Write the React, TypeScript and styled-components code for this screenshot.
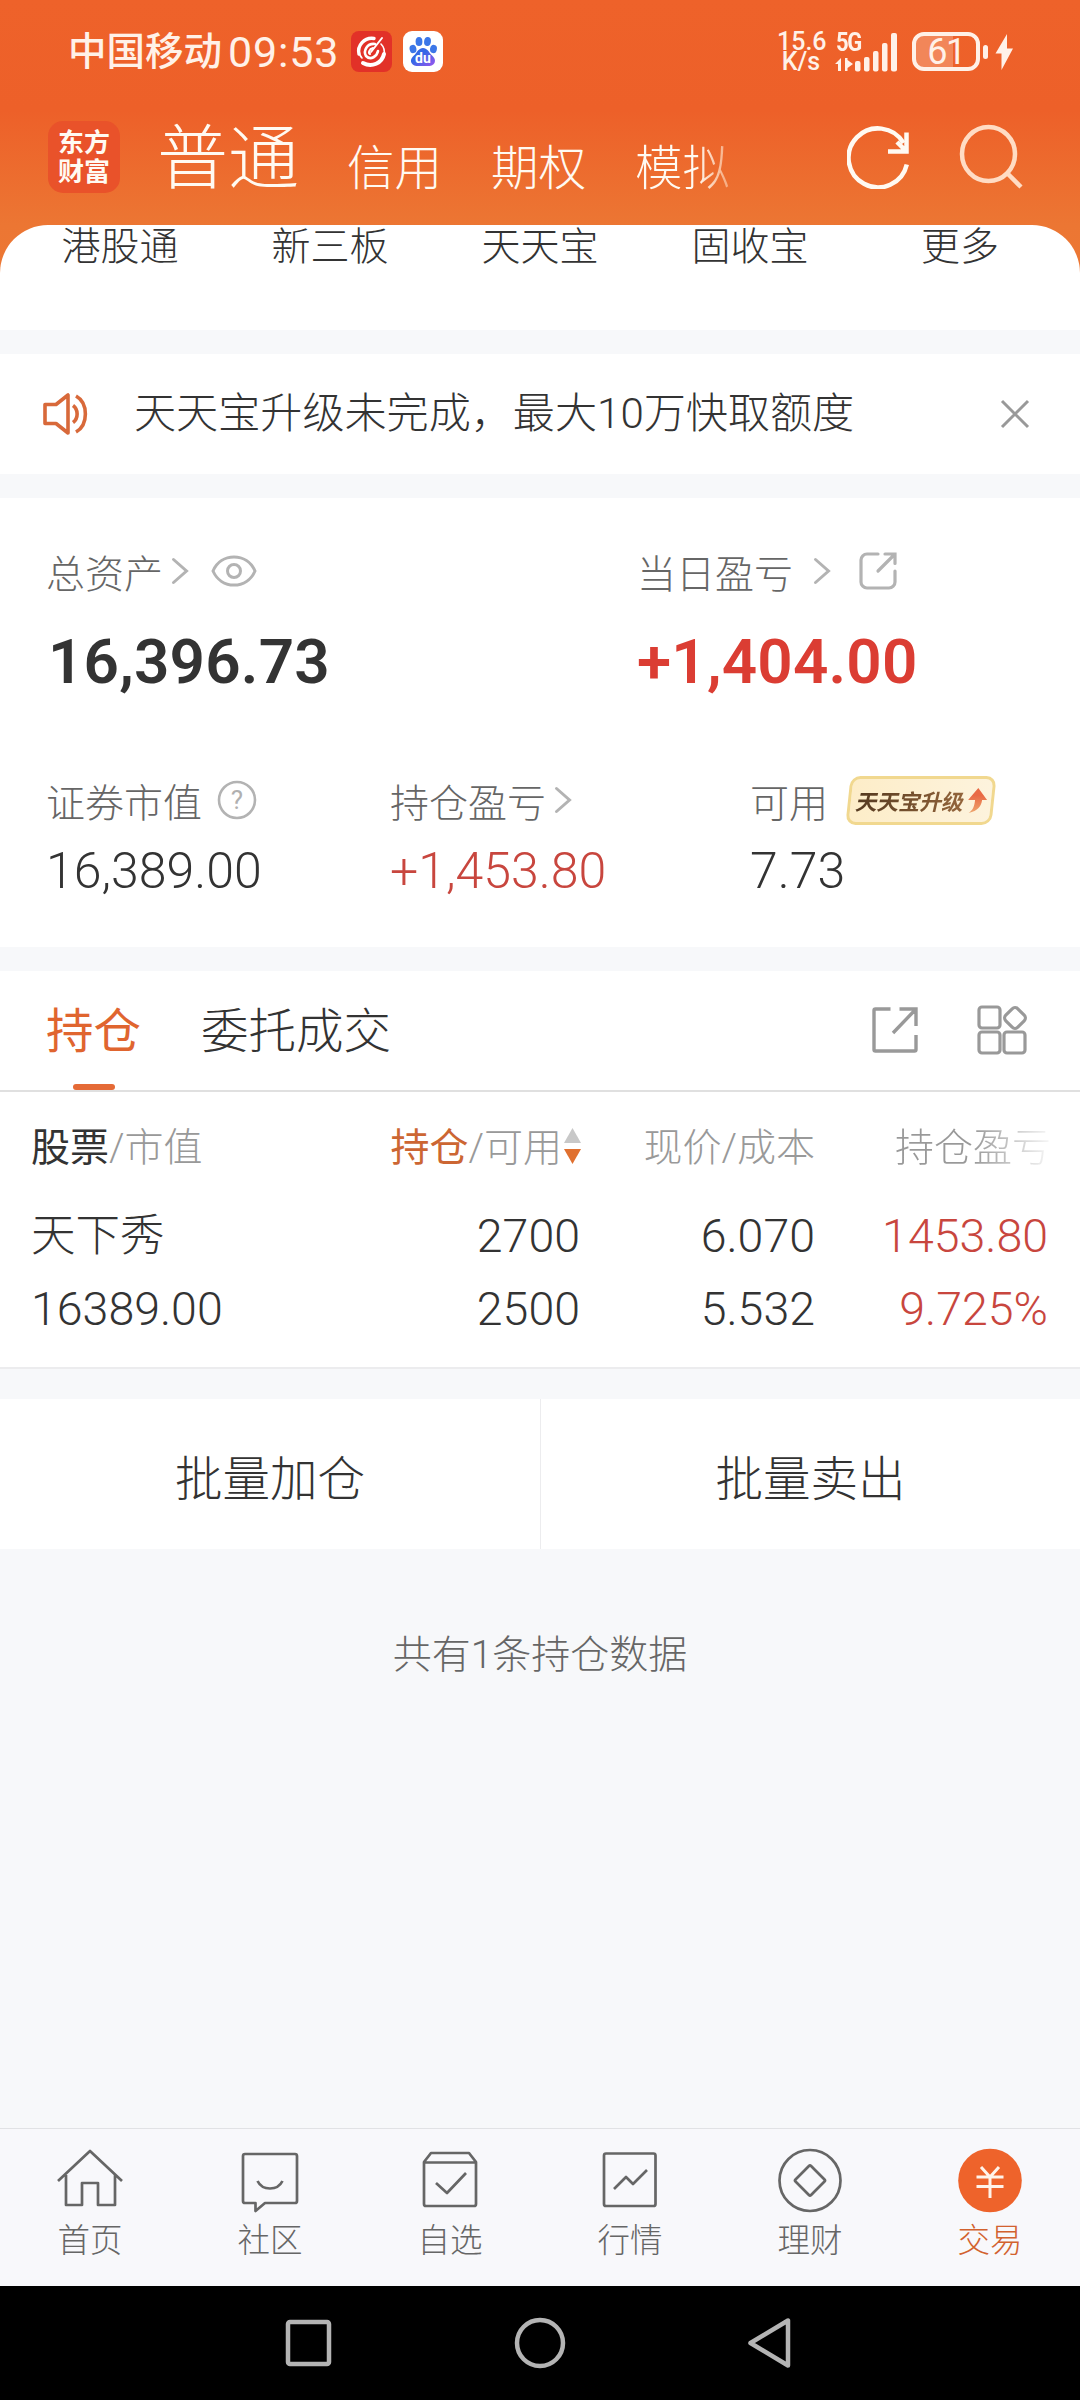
import React from "react";
import styled, { createGlobalStyle } from "styled-components";

const Global = createGlobalStyle`
  * { box-sizing: border-box; }
  html, body { margin: 0; padding: 0; }
  body {
    background: #f7f8fa;
    font-family: Roboto, "Noto Sans CJK SC", sans-serif;
    font-weight: 300;
    color: #333;
  }
  svg { display: block; flex: none; }
`;

const Screen = styled.div`
  width: 1080px;
  height: 2400px;
  display: flex;
  flex-direction: column;
  overflow: hidden;
  white-space: nowrap;
`;

/* ---------- top area ---------- */

const TopArea = styled.header`
  height: 330px;
  display: flex;
  flex-direction: column;
  background: linear-gradient(#ee622a 0, #ed6029 110px, #ec7633 225px, #ec7a35 330px);
`;

const StatusBar = styled.div`
  height: 103px;
  padding: 0 67px 0 68px;
  display: flex;
  align-items: center;
  color: #fff1e8;
`;

const Carrier = styled.span`
  font-size: 38.5px;
  line-height: 44px;
  font-weight: 500;
`;

const Clock = styled.span`
  margin-left: 6px;
  width: 115px;
  font-size: 43px;
  line-height: 44px;
  font-weight: 400;
  letter-spacing: 0.8px;
`;

const AppIcons = styled.div`
  display: flex;
  gap: 11px;
  margin-left: 8px;
`;

const StatusRight = styled.div`
  margin-left: auto;
  display: flex;
  align-items: center;
`;

const Speed = styled.div`
  width: 48px;
  margin-right: 10px;
  text-align: center;
  font-size: 25px;
  line-height: 20px;
  font-weight: 500;
`;

const Network = styled.div`
  width: 62px;
  height: 40px;
  display: flex;
  margin-right: 15px;
  position: relative;
`;

const NetworkLabel = styled.span`
  position: absolute;
  left: 1px;
  top: 1px;
  font-size: 25px;
  line-height: 20px;
  font-weight: 700;
  letter-spacing: -1.5px;
  transform: scaleX(0.88);
  transform-origin: left;
`;

const Battery = styled.div`
  width: 68px;
  height: 39px;
  border: 4px solid #fff1e8;
  border-radius: 12px;
  display: flex;
  align-items: center;
  justify-content: center;
  background: linear-gradient(90deg, #f28659 61%, transparent 61%);
  font-size: 36px;
  line-height: 36px;
  font-weight: 400;
  letter-spacing: -1.5px;
`;

const BatteryTip = styled.div`
  width: 5px;
  height: 14px;
  margin: 0 7px 0 3px;
  border-radius: 3px;
  background: #fff1e8;
`;

const TitleRow = styled.div`
  height: 122px;
  display: flex;
  padding: 0 57px 0 48px;
  color: #fffaf2;
`;

const Logo = styled.div`
  width: 72px;
  height: 72px;
  margin-top: 18px;
  padding-top: 8px;
  border-radius: 15px;
  background: #e9522a;
  text-align: center;
  font-size: 26px;
  line-height: 29px;
  font-weight: 700;
`;

const Accounts = styled.nav`
  display: flex;
  margin-left: 37px;
`;

const MainAccount = styled.span`
  font-size: 71px;
  line-height: 80px;
  margin: 16px 48px 0 0;
`;

const Account = styled.span<{ $fade?: boolean }>`
  font-size: 47.5px;
  line-height: 60px;
  margin: 36px 49px 0 0;
  ${(p) =>
    p.$fade &&
    `background: linear-gradient(90deg, #fffaf2 65%, rgba(255,220,190,0.5)); 
     -webkit-background-clip: text; color: transparent;`}
`;

const TitleActions = styled.div`
  margin-left: auto;
  display: flex;
  gap: 48px;
  padding-top: 20px;
`;

const ShortcutPanel = styled.div`
  flex: 1;
  background: #fff;
  border-radius: 48px 48px 0 0;
  padding: 0 15px;
  display: grid;
  grid-template-columns: repeat(5, 1fr);
  text-align: center;
  font-size: 39px;
  line-height: 44px;
`;

/* ---------- sections ---------- */

const Notice = styled.section`
  height: 120px;
  margin: 24px 0;
  background: #fff;
  padding: 0 50px 0 42px;
  display: flex;
  align-items: center;
  font-size: 42.1px;
`;

const NoticeText = styled.span`
  margin-left: 42px;
  flex: 1;
  line-height: 50px;
`;

const Assets = styled.section`
  height: 449px;
  background: #fff;
  padding: 0 0 0 46px;
`;

const PrimaryAssets = styled.div`
  height: 227px;
  padding-top: 50px;
  display: grid;
  grid-template-columns: 591px 1fr;
`;

const SecondaryAssets = styled.div`
  display: grid;
  grid-template-columns: 344px 360px 1fr;
  padding-top: 52px;
`;

const Label = styled.div`
  display: flex;
  align-items: center;
  height: 46px;
  font-size: 39px;
  color: #666;
`;

const Total = styled.div<{ $up?: boolean }>`
  margin-top: 35px;
  font-size: 62px;
  line-height: 66px;
  font-weight: 600;
  letter-spacing: ${(p) => (p.$up ? "0.2px" : "0.2px")};
  padding-left: ${(p) => (p.$up ? "0" : "2px")};
  color: ${(p) => (p.$up ? "#db3d33" : "#333")};
`;

const Amount = styled.div<{ $up?: boolean }>`
  margin-top: 20px;
  font-size: 50px;
  line-height: 56px;
  color: ${(p) => (p.$up ? "#c8463e" : "#333")};
`;

const Spacer = styled.i<{ $w: number }>`
  width: ${(p) => p.$w}px;
  flex: none;
`;

const Badge = styled.div`
  width: 146px;
  height: 49px;
  margin-left: 20px;
  border: 3px solid #f1d88f;
  border-radius: 10px;
  background: linear-gradient(90deg, #fdedc8, #fdf3dd);
  transform: skewX(-6deg);
  display: flex;
  align-items: center;
  padding-left: 6px;
  gap: 3px;
  font-size: 21.8px;
  font-weight: 700;
  letter-spacing: -0.3px;
  color: #6b4827;
`;

const BadgeText = styled.span`
  transform: skewX(-7deg);
  background: linear-gradient(90deg, #553a20, #94653b);
  -webkit-background-clip: text;
  color: transparent;
`;

/* ---------- positions ---------- */

const Tabs = styled.div`
  height: 121px;
  margin-top: 24px;
  background: #fff;
  border-bottom: 2px solid #e0e0e0;
  display: flex;
  padding: 0 53px 0 46px;
  font-size: 47.5px;
`;

const Tab = styled.div<{ $active?: boolean }>`
  display: flex;
  flex-direction: column;
  align-items: center;
  justify-content: space-between;
  margin-right: 60px;
  padding-top: 31px;
  line-height: 60px;
  color: ${(p) => (p.$active ? "#e0652f" : "#333")};
  font-weight: ${(p) => (p.$active ? 400 : 300)};
  &::after {
    content: "";
    width: 42px;
    height: 6px;
    border-radius: 3px;
    background: ${(p) => (p.$active ? "#e56a36" : "transparent")};
  }
`;

const TabTools = styled.div`
  margin-left: auto;
  display: flex;
  align-items: center;
  gap: 58px;
  padding-bottom: 1px;
`;

const Table = styled.div`
  height: 277px;
  background: #fff;
  border-bottom: 2px solid #ececee;
  padding: 24px 32px 0 31px;
`;

const GridRow = styled.div`
  display: grid;
  grid-template-columns: 300px 249px 235px 233px;
`;

const HeadRow = styled(GridRow)`
  height: 50px;
  align-items: center;
  font-size: 39px;
  color: #999;
`;

const HeadCell = styled.div<{ $left?: boolean }>`
  display: flex;
  align-items: center;
  justify-content: ${(p) => (p.$left ? "flex-start" : "flex-end")};
`;

const Strong = styled.span<{ $c: string }>`
  color: ${(p) => p.$c};
  font-weight: 400;
`;

const SortArrows = styled.div`
  width: 18px;
  margin: 4px -2px 0 2px;
`;

const FadeText = styled.span`
  background: linear-gradient(90deg, #999 50%, #f4f4f4 98%);
  -webkit-background-clip: text;
  color: transparent;
  margin-right: -3px;
`;

const StockRow = styled(GridRow)`
  padding-top: 34px;
  font-size: 46.5px;
  line-height: 73px;
`;

const Cell = styled.div<{ $left?: boolean; $up?: boolean }>`
  text-align: ${(p) => (p.$left ? "left" : "right")};
  color: ${(p) => (p.$up ? "#c8463e" : "#333")};
`;

const StockName = styled.div`
  font-size: 44.5px;
`;

const Batch = styled.div`
  height: 150px;
  margin-top: 30px;
  background: #fff;
  display: grid;
  grid-template-columns: 1fr 1fr;
`;

const BatchButton = styled.div`
  display: flex;
  align-items: center;
  justify-content: center;
  font-size: 47.5px;
  padding-top: 2px;
  & + & { border-left: 1px solid #ececee; }
`;

const Count = styled.div`
  flex: 1;
  padding-top: 80px;
  text-align: center;
  font-size: 39px;
  line-height: 52px;
  color: #666;
`;

/* ---------- bottom ---------- */

const BottomNav = styled.nav`
  height: 158px;
  background: #f8f8fb;
  border-top: 1px solid #e1e2e5;
  display: grid;
  grid-template-columns: repeat(6, 1fr);
`;

const NavItem = styled.div<{ $active?: boolean }>`
  display: flex;
  flex-direction: column;
  align-items: center;
  padding-top: 18px;
  font-size: 32.5px;
  line-height: 40px;
  gap: 8px;
  color: ${(p) => (p.$active ? "#d2622f" : "#666")};
`;

const SystemNav = styled.div`
  height: 114px;
  background: #000;
  display: flex;
  justify-content: center;
  align-items: center;
  gap: 180px;
`;

/* ---------- icons ---------- */

const StockAppIcon = () => (
  <svg width="41" height="41" viewBox="0 0 41 41">
    <rect width="41" height="41" rx="8" fill="#e23128" />
    <g fill="none" stroke="#fff" strokeLinecap="round">
      <path d="M23 7.5C13 6 6 15 8 23" strokeWidth="3.4" />
      <path d="M8 20c0 3 1 5 3 7" strokeWidth="1.6" />
      <path d="M12 32c9 5 19 0 21-9" strokeWidth="4" />
      <path d="M33 24c1-5-1-9-3-11" strokeWidth="1.6" />
      <path d="M31 7L20 21" strokeWidth="2" />
      <path d="M24 13c-8-1-12 7-9 12 5 5 11 0 12-5" strokeWidth="2.6" />
      <path d="M22 17c-4 1-5 5-3 6" strokeWidth="2" />
    </g>
  </svg>
);

const BaiduText = styled.text`
  font: 700 14px Roboto, sans-serif;
  fill: #fff;
`;

const BaiduIcon = () => (
  <svg width="40" height="41" viewBox="0 0 40 41">
    <defs>
      <linearGradient id="paw" x1="0" y1="0" x2="1" y2="1">
        <stop offset="0.4" stopColor="#3568e6" />
        <stop offset="1" stopColor="#9b55ee" />
      </linearGradient>
    </defs>
    <rect width="40" height="41" rx="9" fill="#fff" />
    <g fill="#3b76e8">
      <ellipse cx="10" cy="18" rx="3.4" ry="4.2" transform="rotate(-12 10 18)" />
      <ellipse cx="16" cy="10.5" rx="3.4" ry="4.6" />
      <ellipse cx="24.5" cy="10.5" rx="3.4" ry="4.6" transform="rotate(8 24.5 10.5)" />
      <ellipse cx="30.5" cy="18" rx="3.4" ry="4.2" transform="rotate(12 30.5 18)" />
    </g>
    <path d="M20 17c4 0 6 4 8 6.500 3 3 5 5 3.500 8.500-2 4-7 3-11.500 3s-9.500 1-11.500-3c-1.500-3.500.5-5.500 3.500-8.500C14 21 16 17 20 17z" fill="url(#paw)" />
    <BaiduText x="12" y="32">du</BaiduText>
  </svg>
);

const SignalIcon = () => (
  <svg width="62" height="40" viewBox="0 0 62 40" fill="#fff1e8">
    <path d="M0 32l6-6v13H3v-7zM10 26v13h2.500v-3l5.500-4-5.500-4v-2z" />
    <rect x="20" y="29" width="5.500" height="10.500" rx="2" />
    <rect x="29" y="25" width="5.500" height="14.500" rx="2" />
    <rect x="38" y="19" width="5.500" height="20.500" rx="2" />
    <rect x="47" y="11" width="5.500" height="28.500" rx="2" />
    <rect x="56" y="1" width="6" height="38.500" rx="2" />
  </svg>
);

const BoltIcon = () => (
  <svg width="18" height="36" viewBox="0 0 18 36" fill="#fff1e8">
    <path d="M12 0L.5 19.500h6L6.500 36 18 14.500h-6z" />
  </svg>
);

const RefreshIcon = () => (
  <svg width="64" height="66" viewBox="0 0 64 66" fill="none" stroke="#fffaf2" strokeWidth="4.500">
    <path d="M59.800 41.500A29.500 29.500 0 1 1 56.500 20" />
    <path d="M41 28.500h18.500V9.500M59 28L50 19" />
  </svg>
);

const SearchIcon = () => (
  <svg width="64" height="66" viewBox="0 0 64 66" fill="none" stroke="#ffdcc4" strokeWidth="4.500">
    <ellipse cx="29.500" cy="31" rx="26.500" ry="27" />
    <path d="M48.500 50.500L62 64" />
  </svg>
);

const SpeakerIcon = () => (
  <svg width="50" height="44" viewBox="0 0 50 44" fill="none" stroke="#d8693a" strokeWidth="3.600" strokeLinejoin="round">
    <path d="M3 12.500h11L26 3v38L14 31.500H3z" />
    <path d="M31 13.500c5.500 4 5.500 13 0 17M34 4c12.500 7 12.500 29 0 36" />
  </svg>
);

const CloseIcon = () => (
  <svg width="30" height="30" viewBox="0 0 30 30" stroke="#999" strokeWidth="3">
    <path d="M2 2l26 26M28 2L2 28" />
  </svg>
);

const Chevron = () => (
  <svg width="18" height="28" viewBox="0 0 18 28" fill="none" stroke="#b3b3b3" strokeWidth="3" strokeLinecap="round">
    <path d="M2.500 2.500L15.500 14 2.500 25.500" />
  </svg>
);

const EyeIcon = () => (
  <svg width="46" height="34" viewBox="0 0 46 34" fill="none" stroke="#b3b3b3" strokeWidth="3">
    <path d="M2 17C6 8 14 3 23 3s17 5 21 14c-4 9-12 14-21 14S6 26 2 17z" />
    <circle cx="23" cy="17" r="6.500" />
  </svg>
);

const HelpMark = styled.text`
  font: 400 26px Roboto, sans-serif;
  fill: #b0b0b0;
  text-anchor: middle;
`;

const HelpIcon = () => (
  <svg width="40" height="40" viewBox="0 0 40 40">
    <circle cx="20" cy="20" r="18" fill="none" stroke="#b3b3b3" strokeWidth="2.600" />
    <HelpMark x="20" y="29">?</HelpMark>
  </svg>
);

const ShareRoundIcon = () => (
  <svg width="40" height="40" viewBox="0 0 40 40" fill="none" stroke="#b3b3b3" strokeWidth="3.200" strokeLinecap="round">
    <path d="M20 3H9a6 6 0 0 0-6 6v22a6 6 0 0 0 6 6h22a6 6 0 0 0 6-6V20" />
    <path d="M27 3h10v9.500M36 4L20 20" />
  </svg>
);

const UpArrow = () => (
  <svg width="20" height="27" viewBox="0 0 20 27">
    <defs>
      <linearGradient id="up" x1="0" y1="0" x2="0" y2="1">
        <stop offset="0.3" stopColor="#e96a45" />
        <stop offset="1" stopColor="#eea66f" />
      </linearGradient>
    </defs>
    <path d="M9 1l10 12h-5c0 6-3 11-12 13 4-3 5-7 5-13H0z" fill="url(#up)" />
  </svg>
);

const ShareSquareIcon = () => (
  <svg width="48" height="48" viewBox="0 0 48 48" fill="none" stroke="#999" strokeWidth="3.400">
    <path d="M19.500 3H4.500Q3 3 3 4.500v39Q3 45 4.500 45h39q1.500 0 1.500-1.500V29M28.500 3H45v17M45 3L22 27" />
  </svg>
);

const WidgetsIcon = () => (
  <svg width="50" height="50" viewBox="0 0 50 50" fill="none" stroke="#999" strokeWidth="3.200">
    <rect x="2" y="2" width="21" height="21" rx="3" />
    <rect x="2" y="27" width="21" height="21" rx="3" />
    <rect x="27" y="27" width="21" height="21" rx="3" />
    <rect x="29.500" y="4.500" width="17" height="17" rx="4" transform="rotate(45 38 13)" />
  </svg>
);

const SortIcon = () => (
  <svg width="17" height="36" viewBox="0 0 17 36">
    <path d="M8.500 0L17 15H0z" fill="#c8c8c8" />
    <path d="M8.500 36L17 21H0z" fill="#e0702f" />
  </svg>
);

const NavSvg = styled.svg`
  width: 66px;
  height: 66px;
  fill: none;
  stroke: #666;
  stroke-width: 2.7;
  stroke-linejoin: round;
`;

const HomeIcon = () => (
  <NavSvg viewBox="0 0 66 66">
    <path d="M1 31L33 1l32 30M9 25v30h16V33h16v22h17V25" transform="translate(0 3)" />
  </NavSvg>
);
const CommunityIcon = () => (
  <NavSvg viewBox="0 0 66 66">
    <path d="M8 7h50q2 0 2 2v45q0 2-2 2H28l-9.500 8v-8H8q-2 0-2-2V9q0-2 2-2z" />
    <path d="M20.500 34c5 10 20 10 25 0" />
  </NavSvg>
);
const FavoriteIcon = () => (
  <NavSvg viewBox="0 0 66 66">
    <path d="M7 15l7-9h38l7 9v42q0 2-2 2H9q-2 0-2-2zM7 15.500h52M19 36l11 10 19-20" />
  </NavSvg>
);
const MarketIcon = () => (
  <NavSvg viewBox="0 0 66 66">
    <rect x="7" y="6.500" width="51.500" height="52.500" rx="2" />
    <path d="M17 42l12-12 7 7 14-14" />
  </NavSvg>
);
const WealthIcon = () => (
  <NavSvg viewBox="0 0 66 66">
    <circle cx="33" cy="33.500" r="30.500" />
    <rect x="22" y="22.500" width="22" height="22" rx="1.500" transform="rotate(45 33 33.500)" />
  </NavSvg>
);
const TradeIcon = () => (
  <NavSvg viewBox="0 0 66 66">
    <circle cx="33" cy="33.500" r="31.800" fill="#ee632b" stroke="none" />
    <path d="M24 20l9 10 9-10M19.500 30h27M19.500 39.500h27M33 30v21" stroke="#fff3ea" strokeWidth="3" />
  </NavSvg>
);

const navItems = [
  { label: "首页", icon: <HomeIcon /> },
  { label: "社区", icon: <CommunityIcon /> },
  { label: "自选", icon: <FavoriteIcon /> },
  { label: "行情", icon: <MarketIcon /> },
  { label: "理财", icon: <WealthIcon /> },
  { label: "交易", icon: <TradeIcon />, active: true },
];

const shortcuts = ["港股通", "新三板", "天天宝", "固收宝", "更多"];

export default function App() {
  return (
    <>
      <Global />
      <Screen>
        <TopArea>
          <StatusBar>
            <Carrier>中国移动</Carrier>
            <Clock>09:53</Clock>
            <AppIcons>
              <StockAppIcon />
              <BaiduIcon />
            </AppIcons>
            <StatusRight>
              <Speed>
                15.6
                <br />
                K/s
              </Speed>
              <Network>
                <NetworkLabel>5G</NetworkLabel>
                <SignalIcon />
              </Network>
              <Battery>61</Battery>
              <BatteryTip />
              <BoltIcon />
            </StatusRight>
          </StatusBar>
          <TitleRow>
            <Logo>
              东方
              <br />
              财富
            </Logo>
            <Accounts>
              <MainAccount>普通</MainAccount>
              <Account>信用</Account>
              <Account>期权</Account>
              <Account $fade>模拟</Account>
            </Accounts>
            <TitleActions>
              <RefreshIcon />
              <SearchIcon />
            </TitleActions>
          </TitleRow>
          <ShortcutPanel>
            {shortcuts.map((s) => (
              <span key={s}>{s}</span>
            ))}
          </ShortcutPanel>
        </TopArea>

        <Notice>
          <SpeakerIcon />
          <NoticeText>天天宝升级未完成，最大10万快取额度</NoticeText>
          <CloseIcon />
        </Notice>

        <Assets>
          <PrimaryAssets>
            <div>
              <Label>
                总资产
                <Spacer $w={8} />
                <Chevron />
                <Spacer $w={22} />
                <EyeIcon />
              </Label>
              <Total>16,396.73</Total>
            </div>
            <div>
              <Label>
                当日盈亏
                <Spacer $w={20} />
                <Chevron />
                <Spacer $w={27} />
                <ShareRoundIcon />
              </Label>
              <Total $up>+1,404.00</Total>
            </div>
          </PrimaryAssets>
          <SecondaryAssets>
            <div>
              <Label>
                证券市值
                <Spacer $w={15} />
                <HelpIcon />
              </Label>
              <Amount>16,389.00</Amount>
            </div>
            <div>
              <Label>
                持仓盈亏
                <Spacer $w={8} />
                <Chevron />
              </Label>
              <Amount $up>+1,453.80</Amount>
            </div>
            <div>
              <Label>
                可用
                <Badge>
                  <BadgeText>天天宝升级</BadgeText>
                  <UpArrow />
                </Badge>
              </Label>
              <Amount>7.73</Amount>
            </div>
          </SecondaryAssets>
        </Assets>

        <Tabs>
          <Tab $active>持仓</Tab>
          <Tab>委托成交</Tab>
          <TabTools>
            <ShareSquareIcon />
            <WidgetsIcon />
          </TabTools>
        </Tabs>
        <Table>
          <HeadRow>
            <HeadCell $left>
              <Strong $c="#333">股票</Strong>/市值
            </HeadCell>
            <HeadCell>
              <Strong $c="#cc6633">持仓</Strong>/可用
              <SortArrows>
                <SortIcon />
              </SortArrows>
            </HeadCell>
            <HeadCell>现价/成本</HeadCell>
            <HeadCell>
              <FadeText>持仓盈亏</FadeText>
            </HeadCell>
          </HeadRow>
          <StockRow>
            <Cell $left>
              <StockName>天下秀</StockName>
              <div>16389.00</div>
            </Cell>
            <Cell>
              <div>2700</div>
              <div>2500</div>
            </Cell>
            <Cell>
              <div>6.070</div>
              <div>5.532</div>
            </Cell>
            <Cell $up>
              <div>1453.80</div>
              <div>9.725%</div>
            </Cell>
          </StockRow>
        </Table>

        <Batch>
          <BatchButton>批量加仓</BatchButton>
          <BatchButton>批量卖出</BatchButton>
        </Batch>
        <Count>共有1条持仓数据</Count>

        <BottomNav>
          {navItems.map((n) => (
            <NavItem key={n.label} $active={n.active}>
              {n.icon}
              {n.label}
            </NavItem>
          ))}
        </BottomNav>
        <SystemNav>
          <svg width="50" height="52" viewBox="0 0 50 52" fill="none" stroke="#b4b4b4" strokeWidth="4.500">
            <rect x="4" y="5" width="41" height="42" rx="2" />
          </svg>
          <svg width="52" height="52" viewBox="0 0 52 52" fill="none" stroke="#b4b4b4" strokeWidth="4.500">
            <circle cx="26" cy="26" r="23" />
          </svg>
          <svg width="50" height="52" viewBox="0 0 50 52" fill="none" stroke="#b4b4b4" strokeWidth="4.500" strokeLinejoin="round">
            <path d="M42 3.500v45L4.500 26z" />
          </svg>
        </SystemNav>
      </Screen>
    </>
  );
}
